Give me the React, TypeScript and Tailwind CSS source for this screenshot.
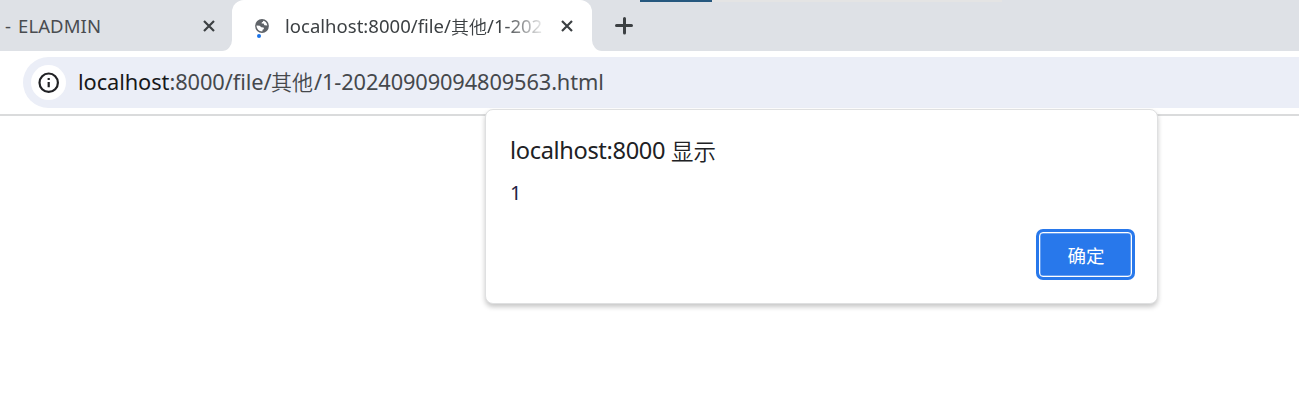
import type { ReactNode } from "react";

function Close() {
  return (
    <svg viewBox="0 0 12 12" className="h-3 w-3 shrink-0" fill="none" stroke="#3c4043" strokeWidth="2.2">
      <path d="M1 1 L11 11 M11 1 L1 11" />
    </svg>
  );
}

function Han({ children, className }: { children: ReactNode; className: string }) {
  return <span className={`font-['Noto_Sans_CJK_SC',sans-serif] ${className}`}>{children}</span>;
}

function PageIcon() {
  return (
    <svg viewBox="0 0 16 20" className="ml-[22px] mt-[19px] h-5 w-4 shrink-0">
      <circle cx="8" cy="7" r="6.9" fill="#5f6368" />
      <path
        d="M9 1.7 C11.4 2.2 13 3.8 13.3 6.6 L10.4 6.2 L9.6 4.6 L7.6 4.5 L7.9 3.2 L9.1 2.8 Z M2.5 6.6 L5.7 6.8 L7.3 8.2 L9.6 8.5 L10 9.9 L8.6 10.7 L8.3 12.5 C4.9 12.5 2.5 10 2.5 6.6 Z"
        fill="#ffffff"
      />
      <circle cx="5" cy="17" r="2" fill="#1a73e8" />
    </svg>
  );
}

export default function App() {
  return (
    <div className="relative h-[400px] w-[1299px] overflow-hidden bg-white font-['Noto_Sans',sans-serif] whitespace-nowrap">
      <header className="flex h-[51px] bg-[#dee1e6]">
        <div className="flex h-full w-[232px] justify-between rounded-br-[10px] bg-[#dee1e6] pl-[5px] pr-[17px]">
          <span className="mt-[13px] flex text-[18.5px] leading-[26px] text-[#494c50]">
            <span className="w-[13px]">-</span>
            <span className="tracking-[0.1px]">ELADMIN</span>
          </span>
          <span className="mt-5">
            <Close />
          </span>
        </div>
        <svg viewBox="0 0 10 51" className="-ml-2.5 h-[51px] w-2.5 shrink-0">
          <path d="M10 40 A10 11 0 0 1 0 51 H10 Z" fill="#ffffff" />
        </svg>
        <div className="flex h-full w-[360px] shrink-0 rounded-t-[12px] bg-white">
          <PageIcon />
          <div className="ml-[15px] mt-[13px] flex w-[258px] text-[18.5px] leading-[26px] text-[#3c4043] [mask-image:linear-gradient(to_right,black_218px,transparent_262px)]">
            <span className="w-[166px] shrink-0 tracking-[0.02px]">localhost:8000/file/</span>
            <Han className="w-[36px] shrink-0 text-[18px] font-[350]">其他</Han>
            <span className="shrink-0">/1-202</span>
          </div>
          <span className="ml-[18px] mt-5">
            <Close />
          </span>
        </div>
        <svg viewBox="0 0 10 51" className="h-[51px] w-2.5 shrink-0">
          <path d="M0 40 A10 11 0 0 0 10 51 H0 Z" fill="#ffffff" />
        </svg>
        <svg viewBox="0 0 18 18" className="ml-[13px] mt-[17px] h-[18px] w-[18px] shrink-0" stroke="#3c4043" strokeWidth="3" strokeLinecap="round">
          <path d="M1.5 8.5 H16.5 M9.5 1.5 V16" />
        </svg>
        <div className="ml-[7px] h-0.5 w-[72px] bg-[#26587f]" />
        <div className="h-0.5 w-[290px] bg-[#e4e4e4]" />
      </header>
      <div className="h-[65px] border-b-2 border-[#dadbdc] pl-[23px] pt-1.5">
        <div className="flex h-[51px] rounded-l-full bg-[#ebeef7] pl-2">
          <div className="mt-2 flex h-[35px] w-[35px] items-center justify-center rounded-full bg-white">
            <svg viewBox="0 0 22 22" className="h-[22px] w-[22px]" fill="none" stroke="#202124">
              <circle cx="10.7" cy="10.7" r="9.2" strokeWidth="2.2" />
              <path d="M10.7 10 V15.2 M10.7 6 V8.1" strokeWidth="2.2" />
            </svg>
          </div>
          <div className="ml-[12px] mt-[9px] flex text-[21.8px] leading-[32px] text-[#45484c]">
            <span className="w-[193px] tracking-[-0.08px]">
              <span className="text-[#17181a]">localhost</span>:8000/file/
            </span>
            <Han className="-mt-px w-[43px] text-[21px] font-[350]">其他</Han>
            <span className="tracking-[-0.12px]">/1-20240909094809563.html</span>
          </div>
        </div>
      </div>
      <div
        role="dialog"
        className="absolute left-[485px] top-[109px] flex h-[195px] w-[673px] flex-col rounded-[8px] border border-[#dfe0e1] bg-white pl-6 pr-[22px] shadow-[0_3px_5px_rgba(0,0,0,0.22)]"
      >
        <h1 className="mt-[23px] flex text-[23.6px] leading-[34px] text-[#202124]">
          <span className="w-[161px] tracking-[-0.35px]">localhost:8000</span>
          <Han className="text-[22.5px] font-[350]">显示</Han>
        </h1>
        <p className="mt-[10px] text-[20px] leading-[32px] text-[#202142]">1</p>
        <button className="mt-5 flex h-[51px] w-[99px] shrink-0 self-end rounded-[7px] bg-[#2878eb] p-[3px]">
          <span className="flex h-full w-full items-center justify-center rounded-[4px] border-[1.5px] border-white pl-px pt-0.5 text-[18.5px] leading-none text-white shadow-[inset_0_0_0_0.5px_#ffffff99]">
            <Han className="font-normal">确定</Han>
          </span>
        </button>
      </div>
    </div>
  );
}
